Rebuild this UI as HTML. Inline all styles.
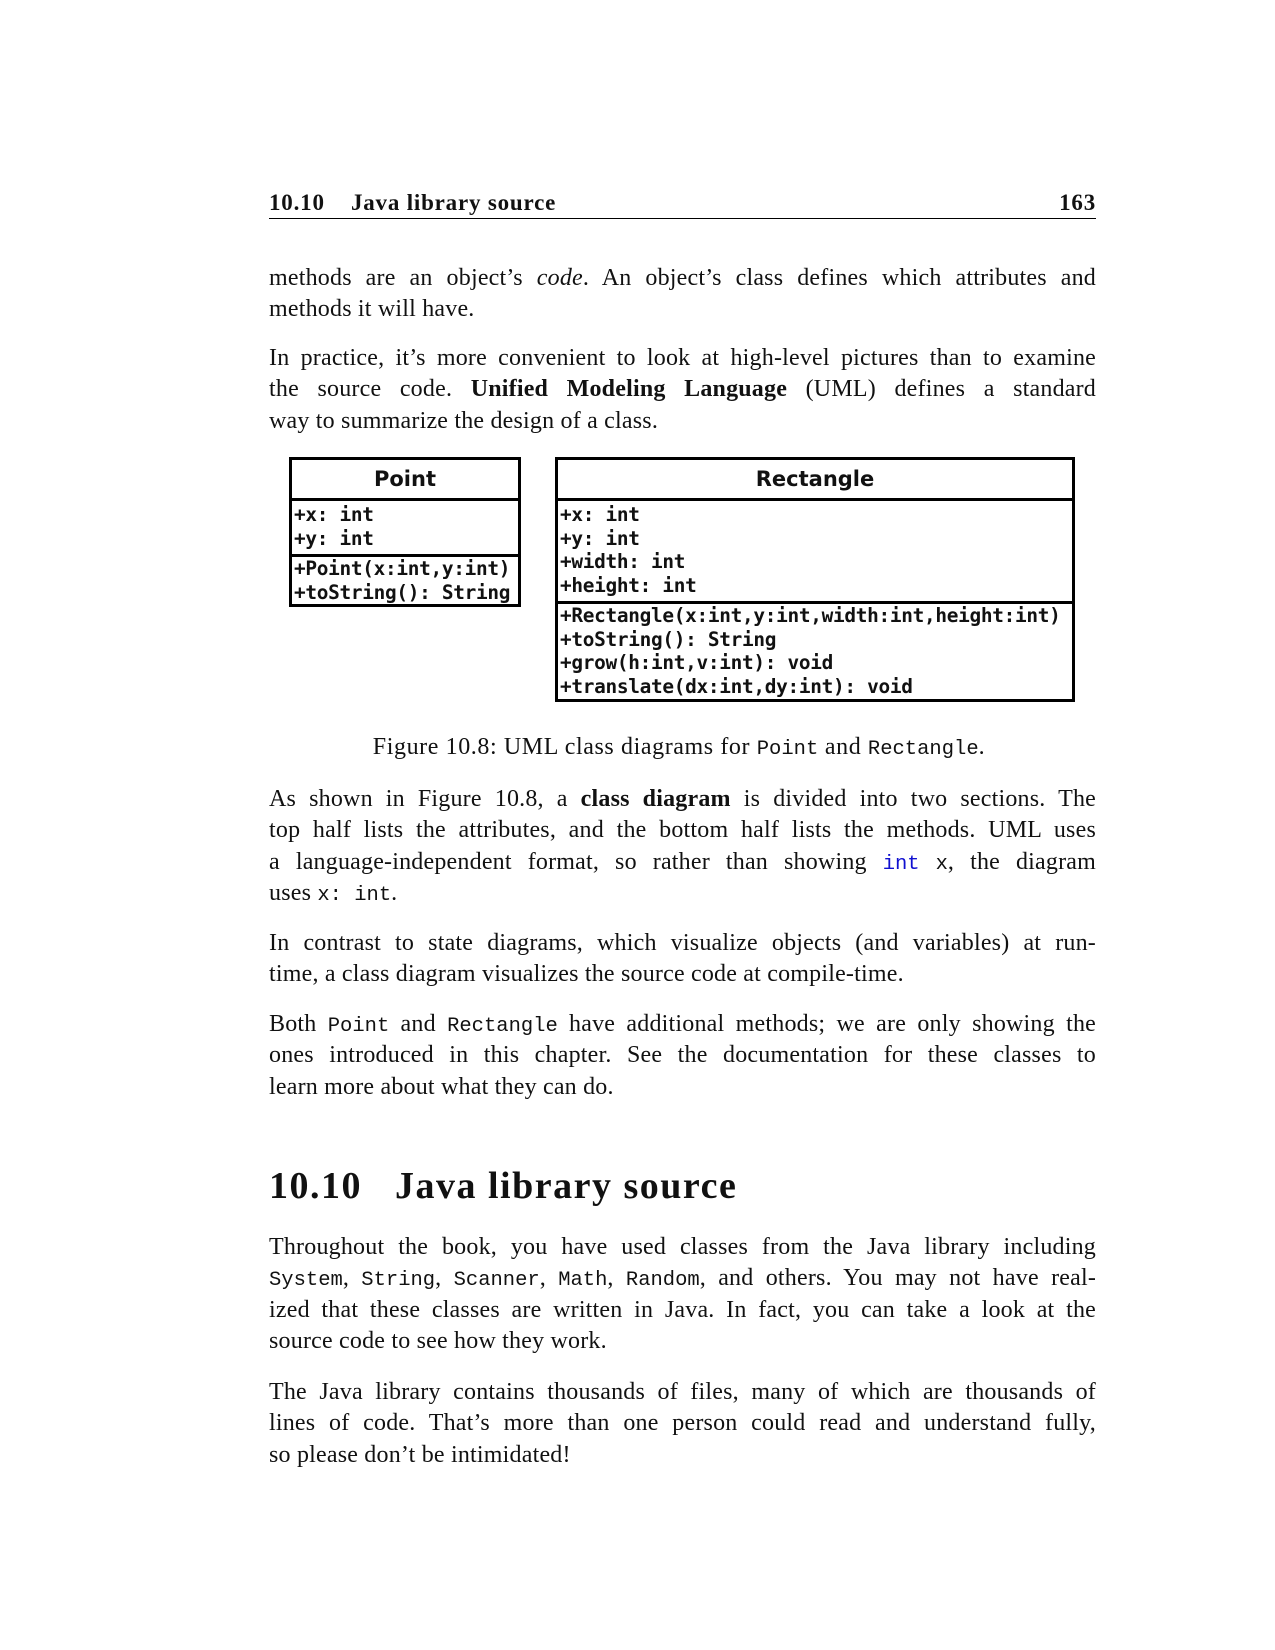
<!DOCTYPE html>
<html><head><meta charset="utf-8"><style>
body{margin:0;background:#fff;}
.pg{position:relative;width:1275px;height:1650px;overflow:hidden;font-family:"Liberation Serif",serif;color:#111;}
.p{position:absolute;left:269px;width:827px;font-size:24px;line-height:31.3px;letter-spacing:0.2px;}
.p div{height:31.3px;white-space:nowrap;text-align:justify;text-align-last:justify;}
.p div.l{text-align-last:left;}
.tt{font-family:"Liberation Mono",monospace;font-size:20.5px;line-height:0;letter-spacing:0;}
.hd{position:absolute;left:269px;width:827px;top:190px;font-size:23px;font-weight:bold;letter-spacing:0.8px;}
.rule{position:absolute;left:269px;width:827px;top:218px;border-top:1.3px solid #000;}
.box{position:absolute;border:3.5px solid #000;font-family:"DejaVu Sans Mono",monospace;font-weight:bold;font-size:19.4px;line-height:23.6px;box-sizing:border-box;}
.box .t{height:38px;border-bottom:3.5px solid #000;text-align:center;line-height:38px;font-family:"DejaVu Sans",sans-serif;font-size:21px;}
.box .s{padding-left:2px;letter-spacing:-0.3px;white-space:nowrap;}
.box .s2{border-top:3px solid #000;padding-left:2px;letter-spacing:-0.3px;white-space:nowrap;}
</style></head><body><div class="pg">
<div class="hd">10.10&nbsp;&nbsp;&nbsp;&nbsp;Java library source<span style="float:right">163</span></div>
<div class="rule"></div>

<div class="p" style="top:263px"><div>methods are an object’s <i>code</i>. An object’s class defines which attributes and</div><div class="l">methods it will have.</div></div>
<div class="p" style="top:343px"><div>In practice, it’s more convenient to look at high-level pictures than to examine</div><div>the source code. <b>Unified Modeling Language</b> (UML) defines a standard</div><div class="l">way to summarize the design of a class.</div></div>

<div class="box" style="left:289px;top:457px;width:232px;height:150px">
<div class="t">Point</div>
<div class="s" style="height:51px;padding-top:2px">+x: int<br>+y: int</div>
<div class="s2">+Point(x:int,y:int)<br>+toString(): String</div>
</div>

<div class="box" style="left:555px;top:457px;width:520px;height:245px">
<div class="t">Rectangle</div>
<div class="s" style="height:98px;padding-top:2px">+x: int<br>+y: int<br>+width: int<br>+height: int</div>
<div class="s2">+Rectangle(x:int,y:int,width:int,height:int)<br>+toString(): String<br>+grow(h:int,v:int): void<br>+translate(dx:int,dy:int): void</div>
</div>

<div class="p" style="top:732px;left:359px;width:640px"><div class="l" style="text-align:center;text-align-last:center;letter-spacing:0.6px">Figure 10.8: UML class diagrams for <span class="tt">Point</span> and <span class="tt">Rectangle</span>.</div></div>

<div class="p" style="top:784px"><div>As shown in Figure 10.8, a <b>class diagram</b> is divided into two sections. The</div><div>top half lists the attributes, and the bottom half lists the methods. UML uses</div><div>a language-independent format, so rather than showing <span class="tt" style="color:#1010d0">int</span> <span class="tt">x</span>, the diagram</div><div class="l">uses <span class="tt">x: int</span>.</div></div>
<div class="p" style="top:928px"><div>In contrast to state diagrams, which visualize objects (and variables) at run-</div><div class="l">time, a class diagram visualizes the source code at compile-time.</div></div>
<div class="p" style="top:1009px"><div>Both <span class="tt">Point</span> and <span class="tt">Rectangle</span> have additional methods; we are only showing the</div><div>ones introduced in this chapter. See the documentation for these classes to</div><div class="l">learn more about what they can do.</div></div>

<div style="position:absolute;left:269px;top:1164px;font-size:38px;font-weight:bold;letter-spacing:1.5px;font-family:'Liberation Serif',serif">10.10&nbsp;&nbsp;&nbsp;Java library source</div>

<div class="p" style="top:1232px"><div>Throughout the book, you have used classes from the Java library including</div><div><span class="tt">System</span>, <span class="tt">String</span>, <span class="tt">Scanner</span>, <span class="tt">Math</span>, <span class="tt">Random</span>, and others. You may not have real-</div><div>ized that these classes are written in Java. In fact, you can take a look at the</div><div class="l">source code to see how they work.</div></div>
<div class="p" style="top:1377px"><div>The Java library contains thousands of files, many of which are thousands of</div><div>lines of code. That’s more than one person could read and understand fully,</div><div class="l">so please don’t be intimidated!</div></div>
</div></body></html>
